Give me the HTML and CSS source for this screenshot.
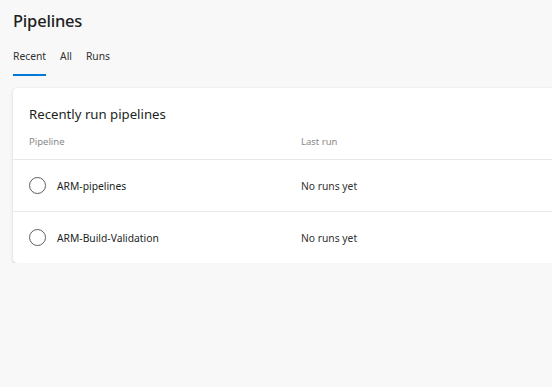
FILE: index.html
```html
<!DOCTYPE html>
<html>
<head>
<meta charset="utf-8">
<link rel="stylesheet" href="styles.css">
</head>
<body>
<div class="page">
  <h1 class="title">Pipelines</h1>
  <nav class="tabs">
    <span class="tab active">Recent</span>
    <span class="tab">All</span>
    <span class="tab">Runs</span>
  </nav>
  <section class="card">
    <h2 class="card-title">Recently run pipelines</h2>
    <div class="row head">
      <div class="col-name">Pipeline</div>
      <div class="col-run">Last run</div>
    </div>
    <div class="row item">
      <div class="col-name"><span class="status"></span><span class="name">ARM-pipelines</span></div>
      <div class="col-run">No runs yet</div>
    </div>
    <div class="row item">
      <div class="col-name"><span class="status"></span><span class="name">ARM-Build-Validation</span></div>
      <div class="col-run">No runs yet</div>
    </div>
  </section>
</div>
</body>
</html>
```
FILE: styles.css
```css
html, body {
  margin: 0;
  padding: 0;
  background: #f8f8f8;
  overflow: hidden;
  font-family: "Noto Sans", "Open Sans", sans-serif;
  color: #201f1e;
}
.page {
  padding: 0 0 0 13px;
  width: 640px;
}
.title {
  margin: 0;
  padding-top: 9px;
  font-size: 16.5px;
  font-weight: 500;
  line-height: 24px;
  letter-spacing: -0.2px;
}
.tabs {
  display: flex;
  gap: 14px;
  margin-top: 15px;
  height: 27px;
  font-size: 10.3px;
}
.tab {
  line-height: 17px;
  height: 26px;
  color: #323130;
}
.tab.active {
  border-bottom: 2px solid #0078d4;
}
.card {
  margin-top: 13px;
  background: #fff;
  border-radius: 4px;
  box-shadow: 0 1.6px 3.6px rgba(0,0,0,0.13), 0 0.3px 0.9px rgba(0,0,0,0.11);
}
.card-title {
  margin: 0;
  padding: 16px 16px 0 16px;
  font-size: 13.2px;
  font-weight: 400;
  line-height: 20px;
}
.row {
  display: flex;
  align-items: center;
  box-sizing: border-box;
}
.col-name {
  width: 272px;
  padding-left: 16px;
  display: flex;
  align-items: center;
}
.col-run {
  flex: 1;
}
.head {
  height: 36px;
  font-size: 9.5px;
  color: #8a8886;
  border-bottom: 1px solid #e8e8e8;
}
.item {
  height: 51px;
  font-size: 10.3px;
}
.item + .item {
  border-top: 1px solid #e8e8e8;
  height: 52px;
}
.item .col-run {
  color: #323130;
}
.status {
  width: 17px;
  height: 17px;
  box-sizing: border-box;
  border: 1.5px solid #605e5c;
  border-radius: 50%;
  margin-right: 11px;
  flex: none;
}
.name {
  font-weight: 400;
  color: #201f1e;
}
```
